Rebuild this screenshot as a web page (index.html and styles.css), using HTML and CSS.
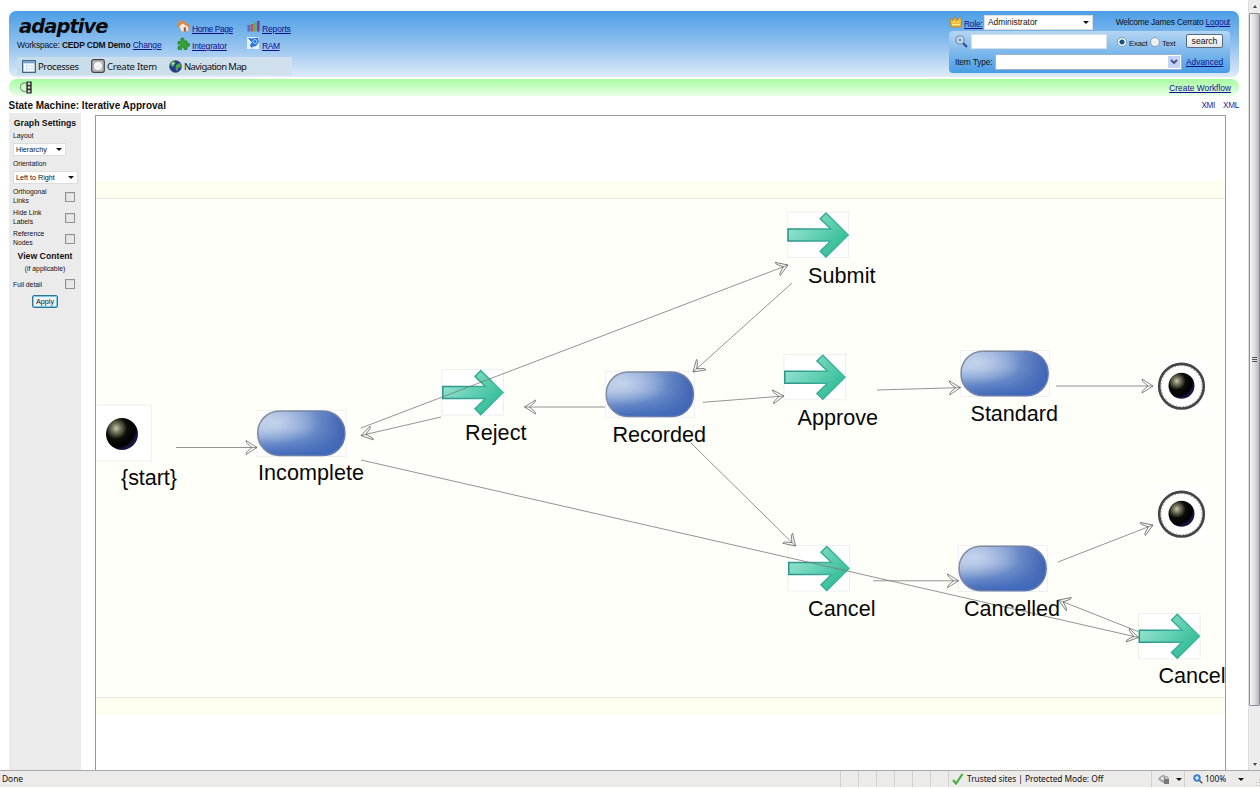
FILE: index.html
```html
<!DOCTYPE html>
<html lang="en">
<head>
<meta charset="utf-8">
<title>State Machine: Iterative Approval</title>
<link rel="stylesheet" href="styles.css">
</head>
<body>
<div class="window">
  <div class="viewport">
    <div class="page">
      <header class="header">
        <div class="brand">
          <div class="logo">adaptive</div>
          <div class="workspace">Workspace: <b>CEDP CDM Demo</b> <a>Change</a></div>
        </div>
        <nav class="links">
          <span class="link"><svg width="13" height="13" viewBox="0 0 13 13"><path d="M2 6 4.5 12 11.5 11V6L6 3Z" fill="#f4e8de" stroke="#b9a191" stroke-width=".7"/><path d="M.5 6.5 5 1.5 12.5 6.5" fill="none" stroke="#e38436" stroke-width="2.2"/><rect x="1.5" y=".5" width="2" height="3" fill="#d98b52"/><path d="M6.8 7.5 9 7.2V11.3L6.8 11.6Z" fill="#a85c32"/></svg><a>Home Page</a></span>
          <span class="link"><svg width="13" height="13" viewBox="0 0 13 13"><rect x=".5" y="5" width="2.7" height="6.5" fill="#4d72cc"/><rect x="3.7" y="4" width="2.7" height="7.5" fill="#d4465b"/><rect x="6.8" y="2.5" width="2.7" height="9" fill="#59b44b"/><rect x="9.9" y=".8" width="2.7" height="10.7" fill="#7a3fae"/></svg><a class="wide">Reports</a></span>
          <span class="link"><svg width="13" height="13" viewBox="0 0 13 13"><path d="M1 4.5H4Q3 1 5.3.8 7.8 1 6.8 3.8L10 4V6.5Q12.7 5.6 12.7 8 12.5 10.3 10 9.3V12.5H7Q7.5 10 5.7 10 4 10 4.4 12.5H1V9.5Q3.3 10 3.3 8 3 6.5 1 7.2Z" fill="#35a235" stroke="#1c7a24" stroke-width=".7"/></svg><a class="wide">Integrator</a></span>
          <span class="link"><svg width="13" height="13" viewBox="0 0 13 13"><rect width="12" height="12" fill="#e6f1ff"/><path d="M1 1 5 1.5 11 .5 12 5 9 9 5 10 6 12 3 9 4 6Z" fill="#2c76dc"/><circle cx="8" cy="4.5" r="2" fill="none" stroke="#a9d2ff"/><path d="M1 2 5 6" stroke="#fff"/></svg><a>RAM</a></span>
        </nav>
        <div class="menu">
          <span class="menu-item processes"><svg width="14" height="13" viewBox="0 0 14 13"><rect x=".7" y=".7" width="12.6" height="11.6" fill="#f6fbff" stroke="#35587f" stroke-width="1.2"/><rect x="1.3" y="1.3" width="11.4" height="2" fill="#6d9cd2"/><path d="M4.5 3.5V12M4.5 6H12.5M4.5 9H12.5" stroke="#c0d9ef" stroke-width=".8"/></svg>Processes</span>
          <span class="menu-item create"><svg width="14" height="14" viewBox="0 0 14 14"><rect x=".7" y=".7" width="12.6" height="12.6" rx="2" fill="#bcbcbc" stroke="#444" stroke-width="1.2"/><circle cx="7" cy="7" r="4.8" fill="#f2f2f2" stroke="#888" stroke-width=".6"/></svg>Create Item</span>
          <span class="menu-item map"><svg width="13" height="13" viewBox="0 0 13 13"><circle cx="6.5" cy="6.5" r="6" fill="#203b8b" stroke="#557" stroke-width=".6"/><path d="M1.5 4Q3 .8 6 1.2L6.5 3.5 5 5 4.5 7 2 6ZM7 5 10.5 3 12 6 10.5 8 9 7.5 8.5 11.5 6.5 9Z" fill="#4caa45"/><circle cx="4" cy="3.5" r="1.2" fill="#bde5c7"/></svg>Navigation Map</span>
        </div>
        <div class="account">
          <div class="role-row">
            <svg width="12" height="12" viewBox="0 0 12 12"><path d="M1 11 0 2 3.2 4.5 5 0.8 7 4.5 10 1.2 11.5 4 11 11Z" fill="#f4bd36" stroke="#b37a13" stroke-width=".7"/><path d="M2 8.5H10M3 6H5M7 6H9" stroke="#fff0a6"/></svg>
            <a class="role">Role:</a>
            <span class="select role-select">Administrator<i class="caret"></i></span>
            <span class="welcome">Welcome James Cerrato <a>Logout</a></span>
          </div>
          <div class="search">
            <div class="search-row">
              <svg class="lens" width="13" height="13" viewBox="0 0 13 13"><path d="M7.5 7.5 12 12" stroke="#314f9a" stroke-width="2.2"/><circle cx="5" cy="5" r="4" fill="#d5e9f8" stroke="#7088a4" stroke-width="1.2"/><path d="M3 5H7M5 3V7" stroke="#4477b5" stroke-width=".9"/></svg>
              <span class="field"></span>
              <span class="radio on"></span><span class="rlabel exact">Exact</span><span class="radio"></span><span class="rlabel">Text</span>
              <span class="button">search</span>
            </div>
            <div class="type-row"><span class="type-label">Item Type:</span><span class="combo"><i><svg width="8" height="6" viewBox="0 0 8 6"><path d="M1 1 4 4 7 1" fill="none" stroke="#3f5280" stroke-width="1.8"/></svg></i></span><a>Advanced</a></div>
          </div>
        </div>
      </header>
      <div class="greenbar">
        <svg width="15" height="13" viewBox="0 0 15 13"><path d="M8 2.2A4.3 4.3 0 1 0 8 10.3" fill="none" stroke="#7f9981" stroke-width="1.1"/><rect x="8.3" y=".5" width="5.4" height="12" fill="#333"/><circle cx="11" cy="2.8" r="1.2" fill="#ddd"/><circle cx="11" cy="6.5" r="1.2" fill="#ddd"/><circle cx="11" cy="10.2" r="1.2" fill="#ddd"/></svg>
        <a>Create Workflow</a>
      </div>
      <div class="titlebar"><h1>State Machine: Iterative Approval</h1><div class="exports"><span>XMI</span><span>XML</span></div></div>
      <div class="work">
        <aside class="settings">
          <h2>Graph Settings</h2>
          <div class="label">Layout</div>
          <span class="select small hierarchy">Hierarchy<i class="caret"></i></span>
          <div class="label">Orientation</div>
          <span class="select small orient">Left to Right<i class="caret"></i></span>
          <div class="check">Orthogonal<br>Links<i></i></div>
          <div class="check">Hide Link<br>Labels<i></i></div>
          <div class="check">Reference<br>Nodes<i></i></div>
          <h2 class="view">View Content</h2>
          <div class="note">(if applicable)</div>
          <div class="check full">Full detail<i></i></div>
          <span class="apply">Apply</span>
        </aside>
        <svg class="diagram" viewBox="96 116 1129 655">
          <defs>
            <linearGradient id="pillx" x1="0" y1="0" x2="1" y2="0"><stop offset="0" stop-color="#a9bfe2"/><stop offset=".55" stop-color="#7c9ad0"/><stop offset="1" stop-color="#3f63b2"/></linearGradient>
            <linearGradient id="pilly" x1="0" y1="0" x2="0" y2="1"><stop offset=".4" stop-color="#3f68b8" stop-opacity="0"/><stop offset="1" stop-color="#3a64b8" stop-opacity=".95"/></linearGradient>
            <radialGradient id="shine" cx=".2" cy=".25" r=".5"><stop offset="0" stop-color="#dce6f5" stop-opacity=".65"/><stop offset="1" stop-color="#d5e1f4" stop-opacity="0"/></radialGradient>
            <linearGradient id="rim" x1="0" y1="0" x2="1" y2=".5"><stop offset="0" stop-color="#8b8f99"/><stop offset="1" stop-color="#6079b2"/></linearGradient>
            <linearGradient id="teal" x1="0" y1="0" x2="1" y2=".7"><stop offset="0" stop-color="#a5ead8"/><stop offset=".5" stop-color="#6bd3b8"/><stop offset="1" stop-color="#2cba94"/></linearGradient>
            <linearGradient id="tealrim" x1="0" y1="0" x2="1" y2="0"><stop offset="0" stop-color="#2b928a"/><stop offset="1" stop-color="#3fbd9e"/></linearGradient>
            <radialGradient id="ball" cx=".32" cy=".32" r=".68"><stop offset="0" stop-color="#c9c9ae"/><stop offset=".2" stop-color="#77775f"/><stop offset=".5" stop-color="#0c0c08"/><stop offset=".85" stop-color="#000"/><stop offset="1" stop-color="#1c1648"/></radialGradient>
            <marker id="head" markerUnits="userSpaceOnUse" markerWidth="14" markerHeight="18" refX="12" refY="9" orient="auto"><path d="M1 2 12 9 1 16 1.5 13.8 7 9 1.5 4.2Z" fill="none" stroke="#555" stroke-width=".7"/></marker>
            <g id="state"><rect width="89" height="46" fill="#fff" stroke="#ececec" stroke-width=".8"/><rect x=".8" y=".8" width="87" height="44.4" rx="21.5" fill="url(#pillx)"/><rect x=".8" y=".8" width="87" height="44.4" rx="21.5" fill="url(#pilly)"/><rect x=".8" y=".8" width="87" height="44.4" rx="21.5" fill="url(#shine)" stroke="url(#rim)" stroke-width="1.5"/></g>
            <g id="action"><rect width="61.5" height="45.5" fill="#fff" stroke="#e9ecec" stroke-width=".8"/><path d="M.8 17H43.5L33 6.8 38.8 1 61 23 38.8 45 33 39.2 43.5 29H.8Z" fill="url(#teal)" stroke="url(#tealrim)" stroke-width="1.5"/></g>
            <g id="final"><rect x="-28" y="-28" width="55" height="55" fill="#fff"/><circle r="22.3" fill="#fff" stroke="#444" stroke-width="2.6"/><circle r="20.5" fill="none" stroke="#888" stroke-width="1" stroke-dasharray="1.3 2"/><circle cy="-.5" r="13" fill="url(#ball)"/></g>
          </defs>
          <rect x="96" y="181" width="1129" height="533" fill="#fffff1"/>
          <rect x="96" y="198" width="1129" height="500" fill="#fffffa"/>
          <path d="M96 198.5H1225M96 697.5H1225" stroke="#ecece2"/>
          <rect x="90" y="405" width="61.5" height="56" fill="#fff" stroke="#ececec" stroke-width=".8"/>
          <circle cx="122" cy="434" r="16" fill="url(#ball)"/>
          <use href="#state" x="257" y="410.3"/><use href="#state" x="605.5" y="371.3"/><use href="#state" x="960.3" y="350.5"/><use href="#state" x="958.3" y="545.5"/>
          <use href="#action" x="787.2" y="212"/><use href="#action" x="442" y="369.6"/><use href="#action" x="784" y="354.3"/><use href="#action" x="788" y="545.5"/><use href="#action" x="1138.5" y="613.3"/>
          <use href="#final" x="1181.5" y="386.2"/><use href="#final" x="1181.5" y="514.2"/>
          <g class="edges">
            <path d="M176 447.5H257"/><path d="M361 428 788 265"/><path d="M441 417 361 435.5"/><path d="M605 407H524.5"/><path d="M703 402.3 784 396"/><path d="M792 283 693 372"/><path d="M691 443 795.5 546"/><path d="M877 390 960.5 387.6"/><path d="M1056 386H1153"/><path d="M873 580.8H958.5"/><path d="M1058 562 1153 525"/><path d="M361 460 1138.5 637.5"/><path d="M1138 631.5 1058.5 600"/>
          </g>
          <g class="names">
            <text x="121" y="485" textLength="56">{start}</text><text x="258" y="480" textLength="106">Incomplete</text><text x="465" y="439.5" textLength="61.5">Reject</text><text x="612.5" y="441.5" textLength="93.5">Recorded</text><text x="808" y="282.5" textLength="67.5">Submit</text><text x="797.5" y="424.5" textLength="80.5">Approve</text><text x="970.5" y="420.5" textLength="87.5">Standard</text><text x="808" y="615.5" textLength="67.5">Cancel</text><text x="964" y="615.5" textLength="96">Cancelled</text><text x="1158.5" y="683" textLength="67">Cancel</text>
          </g>
        </svg>
      </div>
    </div>
    <div class="scrollbar"><i class="up"></i><div class="thumb"><i></i><i></i><i></i></div><i class="down"></i></div>
  </div>
  <footer class="status">
    <span class="done">Done</span>
    <span class="cell"></span><span class="cell"></span><span class="cell"></span><span class="cell"></span><span class="cell"></span><span class="cell"></span>
    <span class="cell zone"><svg width="12" height="12" viewBox="0 0 12 12"><path d="M1 7 4 10.5 10.5 1" fill="none" stroke="#45b13c" stroke-width="2.2"/></svg><span>Trusted sites | Protected Mode: Off</span></span>
    <span class="cell privacy"><svg width="12" height="12" viewBox="0 0 12 12"><path d="M0 6Q4 1 7 2V10Q3 10 0 6Z" fill="#aaa"/><circle cx="4.5" cy="5.5" r="1.5" fill="#eee"/><rect x="6" y="6" width="5" height="5" fill="#777"/><path d="M7 6V4.5Q8.5 2.5 10 4.5V6" fill="none" stroke="#777"/></svg><i class="caret"></i></span>
    <span class="cell zoom"><svg width="10" height="10" viewBox="0 0 10 10"><path d="M6 6 9.3 9.3" stroke="#555" stroke-width="1.6"/><circle cx="4" cy="4" r="3.7" fill="#3d83cf"/><path d="M2 4H6M4 2V6" stroke="#fff" stroke-width="1.2"/></svg><span>100%</span><i class="caret"></i><svg class="grip" width="7" height="7" viewBox="0 0 7 7"><path d="M5 0h1v1h-1zM5 3h1v1h-1zM2 3h1v1h-1zM5 6h1v1h-1zM2 6h1v1h-1z" fill="#b5b2b2"/></svg></span>
  </footer>
</div>
</body>
</html>
```
FILE: styles.css
```css
* { box-sizing: border-box; }
body { margin: 0; background: #fff; font: 8.4px "Liberation Sans", Arial, sans-serif; color: #111; overflow: hidden; }
a { color: #10108c; text-decoration: underline; }
h1, h2 { margin: 0; font-weight: bold; }
svg { flex: none; display: block; }
i { display: block; flex: none; }
.window { width: 1260px; height: 788px; display: flex; flex-direction: column; }
.viewport { height: 770px; display: flex; }
.page { width: 1248px; padding: 11px 9px 0 9px; display: flex; flex-direction: column; overflow: hidden; }
.header { height: 66px; flex: none; border-radius: 7px; background: linear-gradient(#4b9ee6, #8fc0ee 50%, #dfebf8); display: grid; grid-template-columns: 168px 772px 281px; grid-template-rows: 46px 17px; }
.brand { padding: 4px 0 0 8px; white-space: nowrap; }
.logo { font: italic bold 19.5px/24px "DejaVu Sans", sans-serif; letter-spacing: -.95px; color: #0a0a0a; padding-left: 2px; }
.workspace { line-height: 12px; font-size: 8.5px; letter-spacing: -.2px; }
.workspace a { letter-spacing: -.15px; }
.links { display: grid; grid-template-columns: 70px 70px; grid-template-rows: 17px 17px; padding-top: 9px; align-content: start; }
.link { display: flex; gap: 2px; height: 14px; }
.link a { line-height: 18px; font-size: 8.5px; letter-spacing: -.45px; white-space: nowrap; }
.link a.wide { letter-spacing: -.15px; }
.menu { grid-row: 2; grid-column: 1 / 3; width: 275px; height: 18px; margin-left: 8px; padding-left: 5px; background: linear-gradient(90deg, #c6dce9, #d1e0ec); display: flex; align-items: center; font: 9.5px "Noto Sans", "Open Sans", sans-serif; white-space: nowrap; }
.menu-item { display: flex; align-items: center; gap: 2px; }
.processes { width: 69px; letter-spacing: -.4px; }
.create { width: 78px; letter-spacing: -.25px; }
.map { letter-spacing: -.6px; }
.account { grid-column: 3; grid-row: 1 / 3; }
.role-row { height: 20px; display: flex; align-items: center; padding: 2px 0 0 1px; }
.role { margin: 4px 2px 0 2px; width: 19px; letter-spacing: -.2px; }
.select { background: #fff; border: 1px solid #ddd; display: flex; justify-content: space-between; align-items: center; padding: 0 3px; white-space: nowrap; }
.role-select { width: 109px; height: 15px; font-size: 8.4px; margin-left: -1px; }
.caret { width: 0; height: 0; border: 3px solid transparent; border-top-color: #111; border-bottom: 0; }
.welcome { margin-left: auto; white-space: nowrap; font-size: 8.4px; letter-spacing: -.2px; }
.search { width: 281px; height: 42px; border-radius: 4px; background: linear-gradient(#b4d5f3, #489ce5); }
.search-row { display: flex; height: 21px; align-items: center; padding-left: 6px; }
.field { width: 136px; height: 15px; background: #fff; border: 1px solid #d5dfe8; margin: 0 11px 0 3px; }
.radio { width: 10px; height: 10px; flex: none; border-radius: 50%; background: #edf0f1; border: 1px solid #8aa0b2; }
.radio.on { background: radial-gradient(#16537b 0 2px, #f4f8fa 3px); margin-left: -1px; }
.rlabel { font-size: 7.6px; margin: 3px 3px 0 2px; width: 18px; white-space: nowrap; letter-spacing: -.1px; }
.rlabel + .button { margin-left: 3px; }
.rlabel.exact { width: 18px; }
.button { width: 37px; height: 14px; flex: none; border: 1px solid #566c83; border-radius: 2px; background: linear-gradient(#fff, #e4e4e4); text-align: center; line-height: 12px; font-size: 8.6px; margin-top: -2px; }
.type-row { display: flex; height: 20px; align-items: center; padding-left: 6px; }
.type-label { width: 40px; white-space: nowrap; letter-spacing: -.15px; }
.combo { width: 187px; height: 16px; background: #fff; border: 1px solid #9cb4cc; display: flex; justify-content: flex-end; padding: 1px; margin-right: 4px; }
.combo i { width: 12px; background: #c3d3fa; display: grid; place-items: center; }
.greenbar { height: 17px; flex: none; margin-top: 2px; border-radius: 8px; background: linear-gradient(#a6fda0, #eaffe8); display: flex; justify-content: space-between; align-items: center; padding: 0 8px 0 9px; }
.titlebar { height: 17px; flex: none; display: flex; justify-content: space-between; padding-top: 3px; line-height: 13px; }
.titlebar h1 { font-size: 10px; margin-left: -.5px; }
.exports { display: flex; gap: 8px; color: #2b1e90; font-size: 8.2px; line-height: 14px; letter-spacing: -.3px; }
.work { display: flex; width: 1216px; height: 657px; flex: none; }
.settings { width: 72px; background: #ebebeb; padding: 3px 4px 0; font-size: 6.8px; display: flex; flex-direction: column; }
.settings h2 { font-size: 8.7px; line-height: 14px; text-align: center; white-space: nowrap; }
.label { height: 13px; line-height: 11px; }
.small { height: 13px; flex: none; margin-bottom: 2px; font-size: 7.2px; }
.settings .small { padding-left: 2px; }
.hierarchy { width: 53px; }
.orient { width: 65px; }
.check { height: 21px; flex: none; display: flex; justify-content: space-between; align-items: center; line-height: 9px; position: relative; padding-right: 1px; }
.check:has(br) { display: block; padding-top: 1px; }
.check i { width: 10px; height: 10px; border: 1px solid #929292; background: #e8e8e8; box-shadow: inset 1px 1px #d8d8d8; }
.check:has(br) i { position: absolute; right: 2px; top: 6px; }
.check.full { padding-right: 2px; }
.settings .view { height: 14px; }
.note { text-align: center; line-height: 12px; }
.full { height: 18px; }
.apply { align-self: center; width: 26px; height: 13px; margin-top: 2px; border: 1px solid #2f7396; border-radius: 2px; box-shadow: inset 0 0 0 1px #76cbe8; background: #eef3f5; text-align: center; line-height: 11px; font-size: 7.2px; }
.diagram { width: 1131px; height: 656px; margin: 2px 0 0 14px; border: 1px solid #999; border-bottom: 0; overflow: hidden; }
.edges path { fill: none; stroke: #777; stroke-width: .8; marker-end: url(#head); }
.names { font-family: "Liberation Sans", Arial, sans-serif; font-size: 21.6px; fill: #080808; }
.scrollbar { width: 12px; height: 770px; background: #ececec; border-left: 1px solid #ddd; display: flex; flex-direction: column; align-items: center; padding-top: 5px; }
.up { border: 2.5px solid transparent; border-bottom: 3px solid #444; border-top: 0; margin-bottom: 5px; }
.down { border: 2.5px solid transparent; border-top: 3px solid #444; border-bottom: 0; margin-top: 57px; }
.thumb { width: 11px; height: 693px; flex: none; border: 1px solid #8d8d94; border-radius: 1px; background: linear-gradient(90deg, #f7f7f7, #dedee2 50%, #b5b5bf); display: flex; flex-direction: column; justify-content: center; align-items: center; gap: 1px; }
.thumb i { width: 5px; height: 1px; background: #555; }
.status { height: 18px; border-top: 1px solid #aaa; border-bottom: 1px solid #fff; background: #edeaea; display: flex; font: 8.4px/16px "Noto Sans", "Open Sans", sans-serif; white-space: nowrap; }
.done { width: 840px; padding-left: 2px; }
.cell { width: 18px; border-left: 1px solid #d3d0d0; display: flex; align-items: center; }
.zone { width: 203px; padding-left: 3px; gap: 3px; letter-spacing: -.06px; }
.privacy { width: 33px; padding-left: 6px; gap: 6px; }
.zoom { width: 76px; padding-left: 8px; gap: 2px; }
.zoom .caret { margin-left: 10px; }
.grip { margin: 7px 0 0 8px; }
```
